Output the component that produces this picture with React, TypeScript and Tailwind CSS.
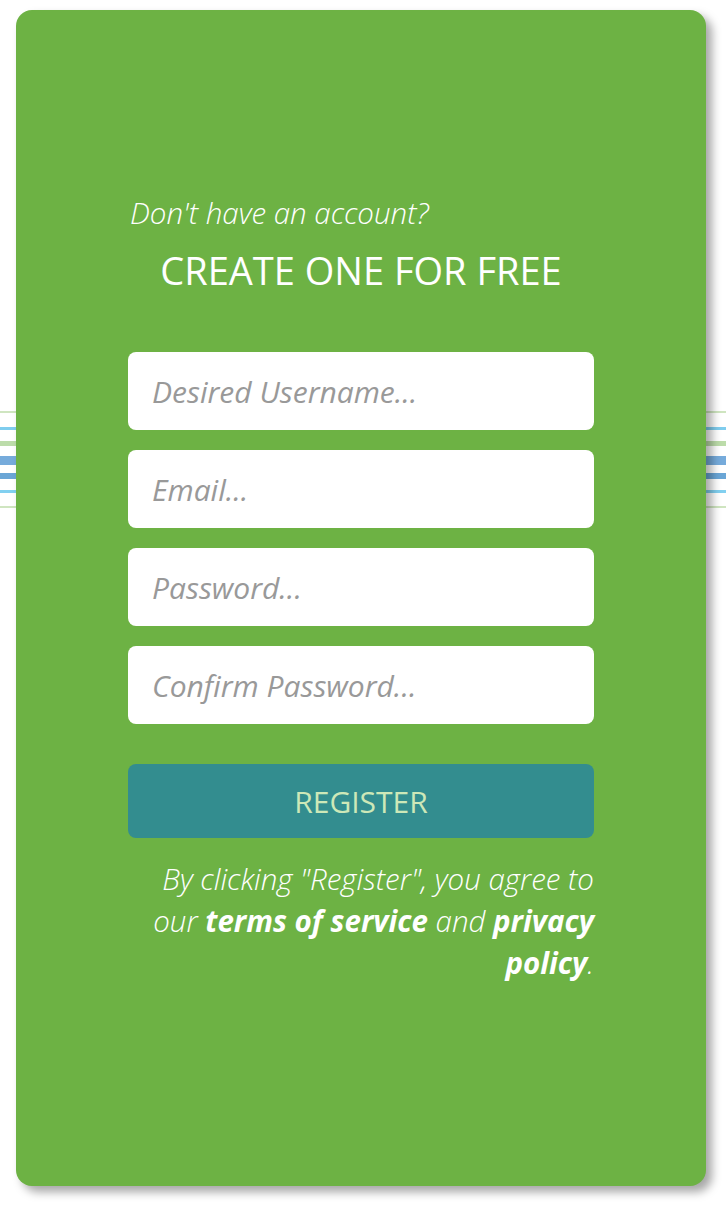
import React from 'react';

const fields = ['Desired Username...', 'Email...', 'Password...', 'Confirm Password...'];

export default function App() {
  return (
    <div className="relative h-[1212px] w-[726px] overflow-hidden bg-white font-['Open_Sans',sans-serif]">
      {/* decorative stripes behind the card */}
      <div className="absolute left-0 right-0 top-[411px] flex flex-col">
        <div className="h-[2px] bg-[#cfe5c0]" />
        <div className="mt-[14px] h-[3px] bg-[#7fcdee]" />
        <div className="mt-[11px] h-[5px] bg-[#bcdcaa]" />
        <div className="mt-[10px] h-[9px] bg-[#76abdb]" />
        <div className="mt-[8px] h-[6px] bg-[#6aa6d6]" />
        <div className="mt-[11px] h-[3px] bg-[#82d0f0]" />
        <div className="mt-[13px] h-[2px] bg-[#cfe5c0]" />
      </div>

      <div className="relative z-10 ml-[16px] mt-[10px] flex h-[1176px] w-[690px] flex-col rounded-[16px] bg-[#6db244] px-[112px] pt-[183px] shadow-[6px_6px_10px_rgba(0,0,0,0.35)]">
        <p className="pl-[2px] text-[29.5px] font-light italic leading-[40px] text-white">Don't have an account?</p>
        <h1 className="mt-[12px] text-center text-[38px] font-normal leading-[50px] text-white">CREATE ONE FOR FREE</h1>

        <form className="mt-[57px] flex flex-col gap-[20px]" onSubmit={(e) => e.preventDefault()}>
          {fields.map((f) => (
            <input
              key={f}
              type={f.includes('Password') ? 'password' : 'text'}
              placeholder={f}
              className="h-[78px] w-full rounded-[8px] bg-white px-[24px] text-[30px] italic text-gray-700 outline-none placeholder:text-[#999999]"
            />
          ))}
          <button
            type="submit"
            className="mt-[20px] h-[74px] w-full rounded-[8px] bg-[#338d8f] text-[30px] font-normal text-[#cde8b8]"
          >
            REGISTER
          </button>
        </form>

        <p className="mt-[20px] text-right text-[29.5px] font-light italic leading-[42px] text-white">
          By clicking "Register", you agree to our <a className="font-[750]">terms of service</a> and{' '}
          <a className="font-[750]">privacy policy</a>.
        </p>
      </div>
    </div>
  );
}
